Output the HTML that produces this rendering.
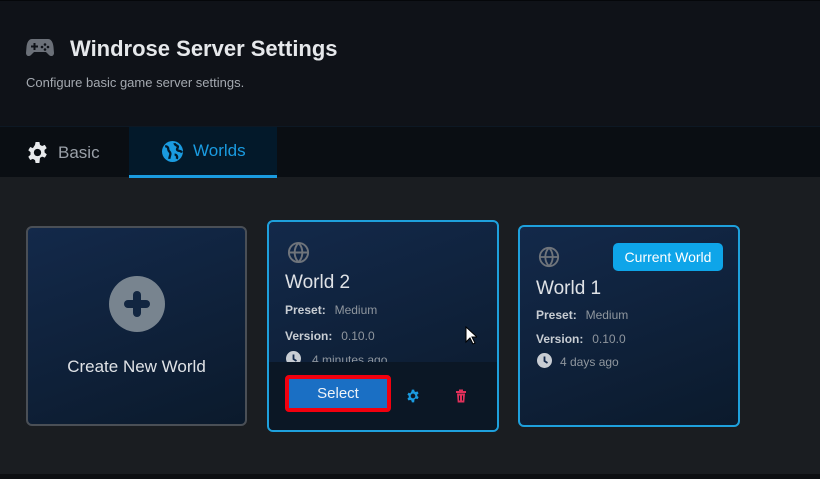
<!DOCTYPE html>
<html><head><style>
*{margin:0;padding:0;box-sizing:border-box}
body{width:820px;height:479px;overflow:hidden;background:#1a1d21;font-family:"Liberation Sans",sans-serif;position:relative}
.hdr{position:absolute;left:0;top:0;width:820px;height:126px;background:#0f1218;border-top:1px solid #05070a}
.tabs{position:absolute;left:0;top:126px;width:820px;height:51px;background:#0a0e13;border-top:1px solid #0d1824}
.tab{position:absolute;top:0;height:51px;display:flex;align-items:center;font-size:17px}
.abs{position:absolute}
.card{position:absolute;border-radius:6px;background:linear-gradient(160deg,#13294a,#0b1a2c);overflow:hidden}
.lbl{font-size:12px;color:#c8cdd3;font-weight:bold}
.val{font-size:12px;color:#8f969e}
</style></head><body>
<div class="hdr">
<svg class="abs" style="left:26px;top:37px" width="28" height="20" viewBox="0 0 28 20"><path d="M6 1h16c3 0 5 3 5.5 8l.5 6c0 3-3 4-5 2l-3-3H8l-3 3c-2 2-5 1-5-2l.5-6C1 4 3 1 6 1z" fill="#6b7078"/><rect x="5" y="7.5" width="7" height="2" fill="#0f1218"/><rect x="7.5" y="5" width="2" height="7" fill="#0f1218"/><circle cx="19" cy="6.5" r="1.3" fill="#0f1218"/><circle cx="22" cy="9" r="1.3" fill="#0f1218"/><circle cx="19" cy="11.5" r="1.3" fill="#0f1218"/><circle cx="16" cy="9" r="1.3" fill="#0f1218"/></svg>
<div class="abs" style="left:70px;top:35px;font-size:22px;font-weight:bold;color:#e6e8eb">Windrose Server Settings</div>
<div class="abs" style="left:26px;top:74px;font-size:13px;color:#a4a9b0">Configure basic game server settings.</div>
</div>
<div class="tabs">
<div class="tab" style="left:26px;color:#9aa0a8"><svg width="23" height="23" viewBox="0 0 24 24" style="margin-right:9px"><path fill="#e8eaec" d="M10 1h4l.6 3 2.2 1.2 2.8-1.2 2 3.4-2.3 2 .1 2.6 2.3 2-2 3.4-2.9-1.1-2.2 1.3L14 23h-4l-.6-3-2.2-1.3-2.8 1.1-2-3.4 2.3-2V11.6l-2.3-2 2-3.4 2.8 1.2L9.4 4z"/><circle cx="12" cy="12" r="3.8" fill="#0a0e13"/></svg>Basic</div>
<div class="tab" style="left:129px;width:148px;background:#03192a;border-bottom:3px solid #1a9be0;padding-left:33px;color:#1a9be0"><svg width="21" height="21" viewBox="0 0 20 20" style="margin-right:10px"><circle cx="10" cy="10" r="10" fill="#1a9be0"/><path d="M3 5c2 0 3 1 3 3s2 2 2 4-1 3-1 5M12 2c0 2 2 2 3 3s-2 3 0 4 3 0 4 2M12 13c2 0 3 2 2 4" stroke="#03192a" stroke-width="2.2" fill="none"/></svg>Worlds</div>
</div>
<div class="abs" style="left:0;top:474px;width:820px;height:5px;background:#0d0f12"></div>

<div class="card" style="left:26px;top:226px;width:221px;height:200px;border:2px solid #4a4f56">
<div class="abs" style="left:81px;top:48px;width:56px;height:56px;border-radius:50%;background:#78848f"></div>
<div class="abs" style="left:105px;top:63px;width:8px;height:26px;border-radius:4px;background:#122641"></div>
<div class="abs" style="left:96px;top:72px;width:26px;height:8px;border-radius:4px;background:#122641"></div>
<div class="abs" style="left:0;width:217px;top:129px;text-align:center;font-size:17px;color:#dfe2e6">Create New World</div>
</div>

<div class="card" style="left:267px;top:220px;width:232px;height:212px;border:2px solid #1ea0dc">
<svg class="abs" style="left:18px;top:19px" width="23" height="23" viewBox="0 0 24 24" fill="none" stroke="#6f747b" stroke-width="2"><circle cx="12" cy="12" r="10"/><path d="M2 12h20M12 2c3 3 4 6 4 10s-1 7-4 10M12 2c-3 3-4 6-4 10s1 7 4 10"/></svg>
<div class="abs" style="left:16px;top:50px;font-size:19px;color:#dfe2e6">World 2</div>
<div class="abs" style="left:16px;top:79px"><span class="lbl">Preset:</span>&nbsp; <span class="val">Medium</span></div>
<div class="abs" style="left:16px;top:105px"><span class="lbl">Version:</span>&nbsp; <span class="val">0.10.0</span></div>
<svg class="abs" style="left:17px;top:129px" width="15" height="15" viewBox="0 0 15 15"><circle cx="7.5" cy="7.5" r="7.5" fill="#c8cdd3"/><path d="M7.5 3.5v4.5l3 2" stroke="#13294a" stroke-width="1.8" fill="none"/></svg>
<div class="abs" style="left:43px;top:129px"><span class="val">4 minutes ago</span></div>
<div class="abs" style="left:0;top:140px;width:232px;height:72px;background:#0b1725"></div>
<div class="abs" style="left:16px;top:153px;width:106px;height:37px;border:4px solid #f2000e;border-radius:4px;background:#1a6fc4;text-align:center;line-height:29px;color:#eef3f8;font-size:15px">Select</div>
<svg class="abs" style="left:137px;top:167px" width="14" height="14" viewBox="0 0 24 24"><path fill="#1a9be0" d="M10 1h4l.6 3 2.2 1.2 2.8-1.2 2 3.4-2.3 2 .1 2.6 2.3 2-2 3.4-2.9-1.1-2.2 1.3L14 23h-4l-.6-3-2.2-1.3-2.8 1.1-2-3.4 2.3-2V11.6l-2.3-2 2-3.4 2.8 1.2L9.4 4z"/><circle cx="12" cy="12" r="4" fill="#0b1725"/></svg>
<svg class="abs" style="left:187px;top:167px" width="10" height="14" viewBox="0 0 10 13"><rect x="0" y="1.5" width="10" height="2" fill="#e0305a"/><rect x="3" y="0" width="4" height="2" fill="#e0305a"/><path d="M1 4h8l-.7 9H1.7z" fill="#e0305a"/><path d="M3.5 6v5M6.5 6v5" stroke="#0b1725" stroke-width="1"/></svg>
</div>

<div class="card" style="left:518px;top:225px;width:222px;height:202px;border:2px solid #1ea0dc">
<svg class="abs" style="left:18px;top:19px" width="22" height="22" viewBox="0 0 24 24" fill="none" stroke="#6f747b" stroke-width="2"><circle cx="12" cy="12" r="10"/><path d="M2 12h20M12 2c3 3 4 6 4 10s-1 7-4 10M12 2c-3 3-4 6-4 10s1 7 4 10"/></svg>
<div class="abs" style="left:93px;top:16px;width:110px;height:28px;border-radius:5px;background:#0ea5e9;color:#fff;font-size:14px;text-align:center;line-height:28px">Current World</div>
<div class="abs" style="left:16px;top:51px;font-size:19px;color:#dfe2e6">World 1</div>
<div class="abs" style="left:16px;top:79px"><span class="lbl">Preset:</span>&nbsp; <span class="val">Medium</span></div>
<div class="abs" style="left:16px;top:103px"><span class="lbl">Version:</span>&nbsp; <span class="val">0.10.0</span></div>
<svg class="abs" style="left:17px;top:126px" width="15" height="15" viewBox="0 0 15 15"><circle cx="7.5" cy="7.5" r="7.5" fill="#c8cdd3"/><path d="M7.5 3.5v4.5l3 2" stroke="#13294a" stroke-width="1.8" fill="none"/></svg>
<div class="abs" style="left:40px;top:126px"><span class="val">4 days ago</span></div>
</div>

<svg class="abs" style="left:465px;top:326px" width="12" height="19" viewBox="0 0 12 19"><path d="M1 1v15l4-4 3 6 2-1-3-6h5z" fill="#fff" stroke="#000" stroke-width="1"/></svg>
</body></html>
